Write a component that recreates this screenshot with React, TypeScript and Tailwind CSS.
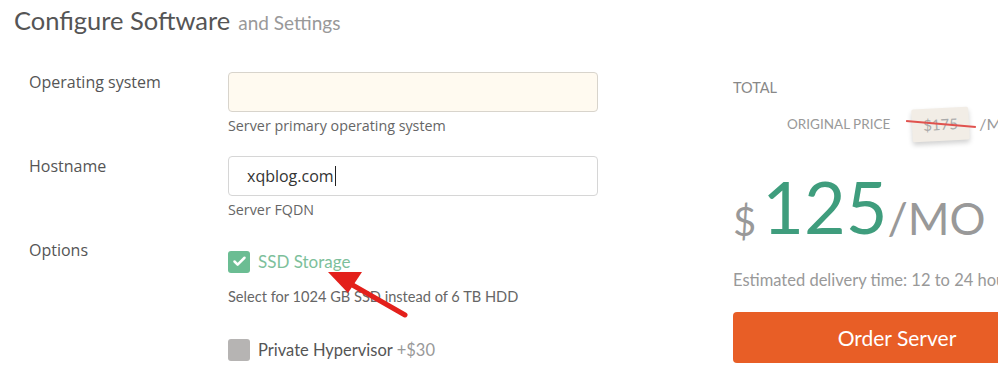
import { Check } from 'lucide-react';

const round = { fontFamily: 'Lato, "Open Sans", sans-serif' };
const plain = { fontFamily: '"Open Sans", "Noto Sans", sans-serif' };

function Row({ label, children }: { label: string; children: React.ReactNode }) {
  return (
    <div className="grid grid-cols-[228px_370px]">
      <div className="pl-[29px] text-[16px] leading-[20px] text-[#555]" style={plain}>
        {label}
      </div>
      <div>{children}</div>
    </div>
  );
}

function Help({ children }: { children: React.ReactNode }) {
  return (
    <p className="mt-[4px] text-[14.3px] leading-[20px] text-[#666]" style={plain}>
      {children}
    </p>
  );
}

export default function App() {
  return (
    <div className="relative flex h-[369px] w-[998px] overflow-hidden bg-white">
      <section className="w-[733px] shrink-0">
        <h1 className="pl-[14px] leading-[40px] text-[#555]" style={round}>
          <span className="text-[25.5px]">Configure Software</span>
          <span className="ml-[8px] text-[19px] text-[#999]">and Settings</span>
        </h1>

        <div className="mt-[28px]">
          <Row label="Operating system">
            <div className="h-[40px] rounded-[4px] border border-[#d8d4cc] bg-[#fffaf0]" />
            <Help>Server primary operating system</Help>
          </Row>

          <div className="mt-[20px]">
            <Row label="Hostname">
              <div
                className="flex h-[40px] items-center rounded-[4px] border border-[#d6d6d6] bg-white pl-[18px] text-[16px] text-[#333]"
                style={plain}
              >
                xqblog.com
                <span className="ml-[1px] h-[20px] w-px bg-[#222]" />
              </div>
              <Help>Server FQDN</Help>
            </Row>
          </div>

          <div className="mt-[20px]">
            <Row label="Options">
              <div className="mt-[9px] flex items-center gap-[8px]">
                <span className="flex h-[22px] w-[22px] items-center justify-center rounded-[3px] bg-[#6bbd93]">
                  <Check size={15} strokeWidth={4} className="text-white" />
                </span>
                <span className="text-[17px] text-[#7dbf9b]" style={round}>
                  SSD Storage
                </span>
              </div>
              <p className="mt-[12px] text-[14.6px] leading-[20px] text-[#666]" style={round}>
                Select for 1024 GB SSD instead of 6 TB HDD
              </p>
              <div className="mt-[31px] flex items-center gap-[8px]">
                <span className="h-[22px] w-[22px] rounded-[3px] bg-[#b6b4b3]" />
                <span className="text-[16.5px] text-[#555]" style={round}>
                  Private Hypervisor <span className="text-[#999]">+$30</span>
                </span>
              </div>
            </Row>
          </div>
        </div>
      </section>

      <aside className="w-[328px] shrink-0 pt-[78px]" style={round}>
        <div className="text-[14.5px] leading-[20px] text-[#888]">TOTAL</div>
        <div className="mt-[16px] flex h-[20px] items-center whitespace-nowrap pl-[54px] text-[13.5px] text-[#999]">
          ORIGINAL PRICE
          <span className="relative ml-[22px] flex h-[33px] w-[57px] -rotate-3 items-center justify-center rounded-[2px] bg-[#f2ede6] text-[15px] text-[#aaa] shadow-[0_3px_5px_rgba(0,0,0,0.18)]">
            $175
            <span className="absolute left-[-6px] top-[15px] h-[2px] w-[70px] rotate-[8deg] bg-[#e0524e]" />
          </span>
          <span className="ml-[10px] text-[16px]">/MO</span>
        </div>

        <div className="mt-[36px] flex h-[72px] items-end whitespace-nowrap leading-none">
          <span className="mb-[1px] text-[40px] text-[#999]">$</span>
          <span className="ml-[6px] text-[72px] text-[#3f9d7d]">125</span>
          <span className="mb-[1px] text-[45px] text-[#999]">/MO</span>
        </div>

        <p className="mt-[28px] whitespace-nowrap text-[16.5px] leading-[20px] text-[#999]">
          Estimated delivery time: 12 to 24 hours
        </p>

        <button className="mt-[22px] h-[51px] w-[328px] rounded-[4px] bg-[#e85e26] text-[21px] text-white">
          Order Server
        </button>
      </aside>

      <svg className="absolute left-[320px] top-[260px]" width="100" height="65" viewBox="0 0 100 65">
        <line x1="85" y1="55" x2="22" y2="19" stroke="#e3201b" strokeWidth="5" strokeLinecap="round" />
        <polygon points="8,12 42,12 28,33" fill="#e3201b" />
      </svg>
    </div>
  );
}
